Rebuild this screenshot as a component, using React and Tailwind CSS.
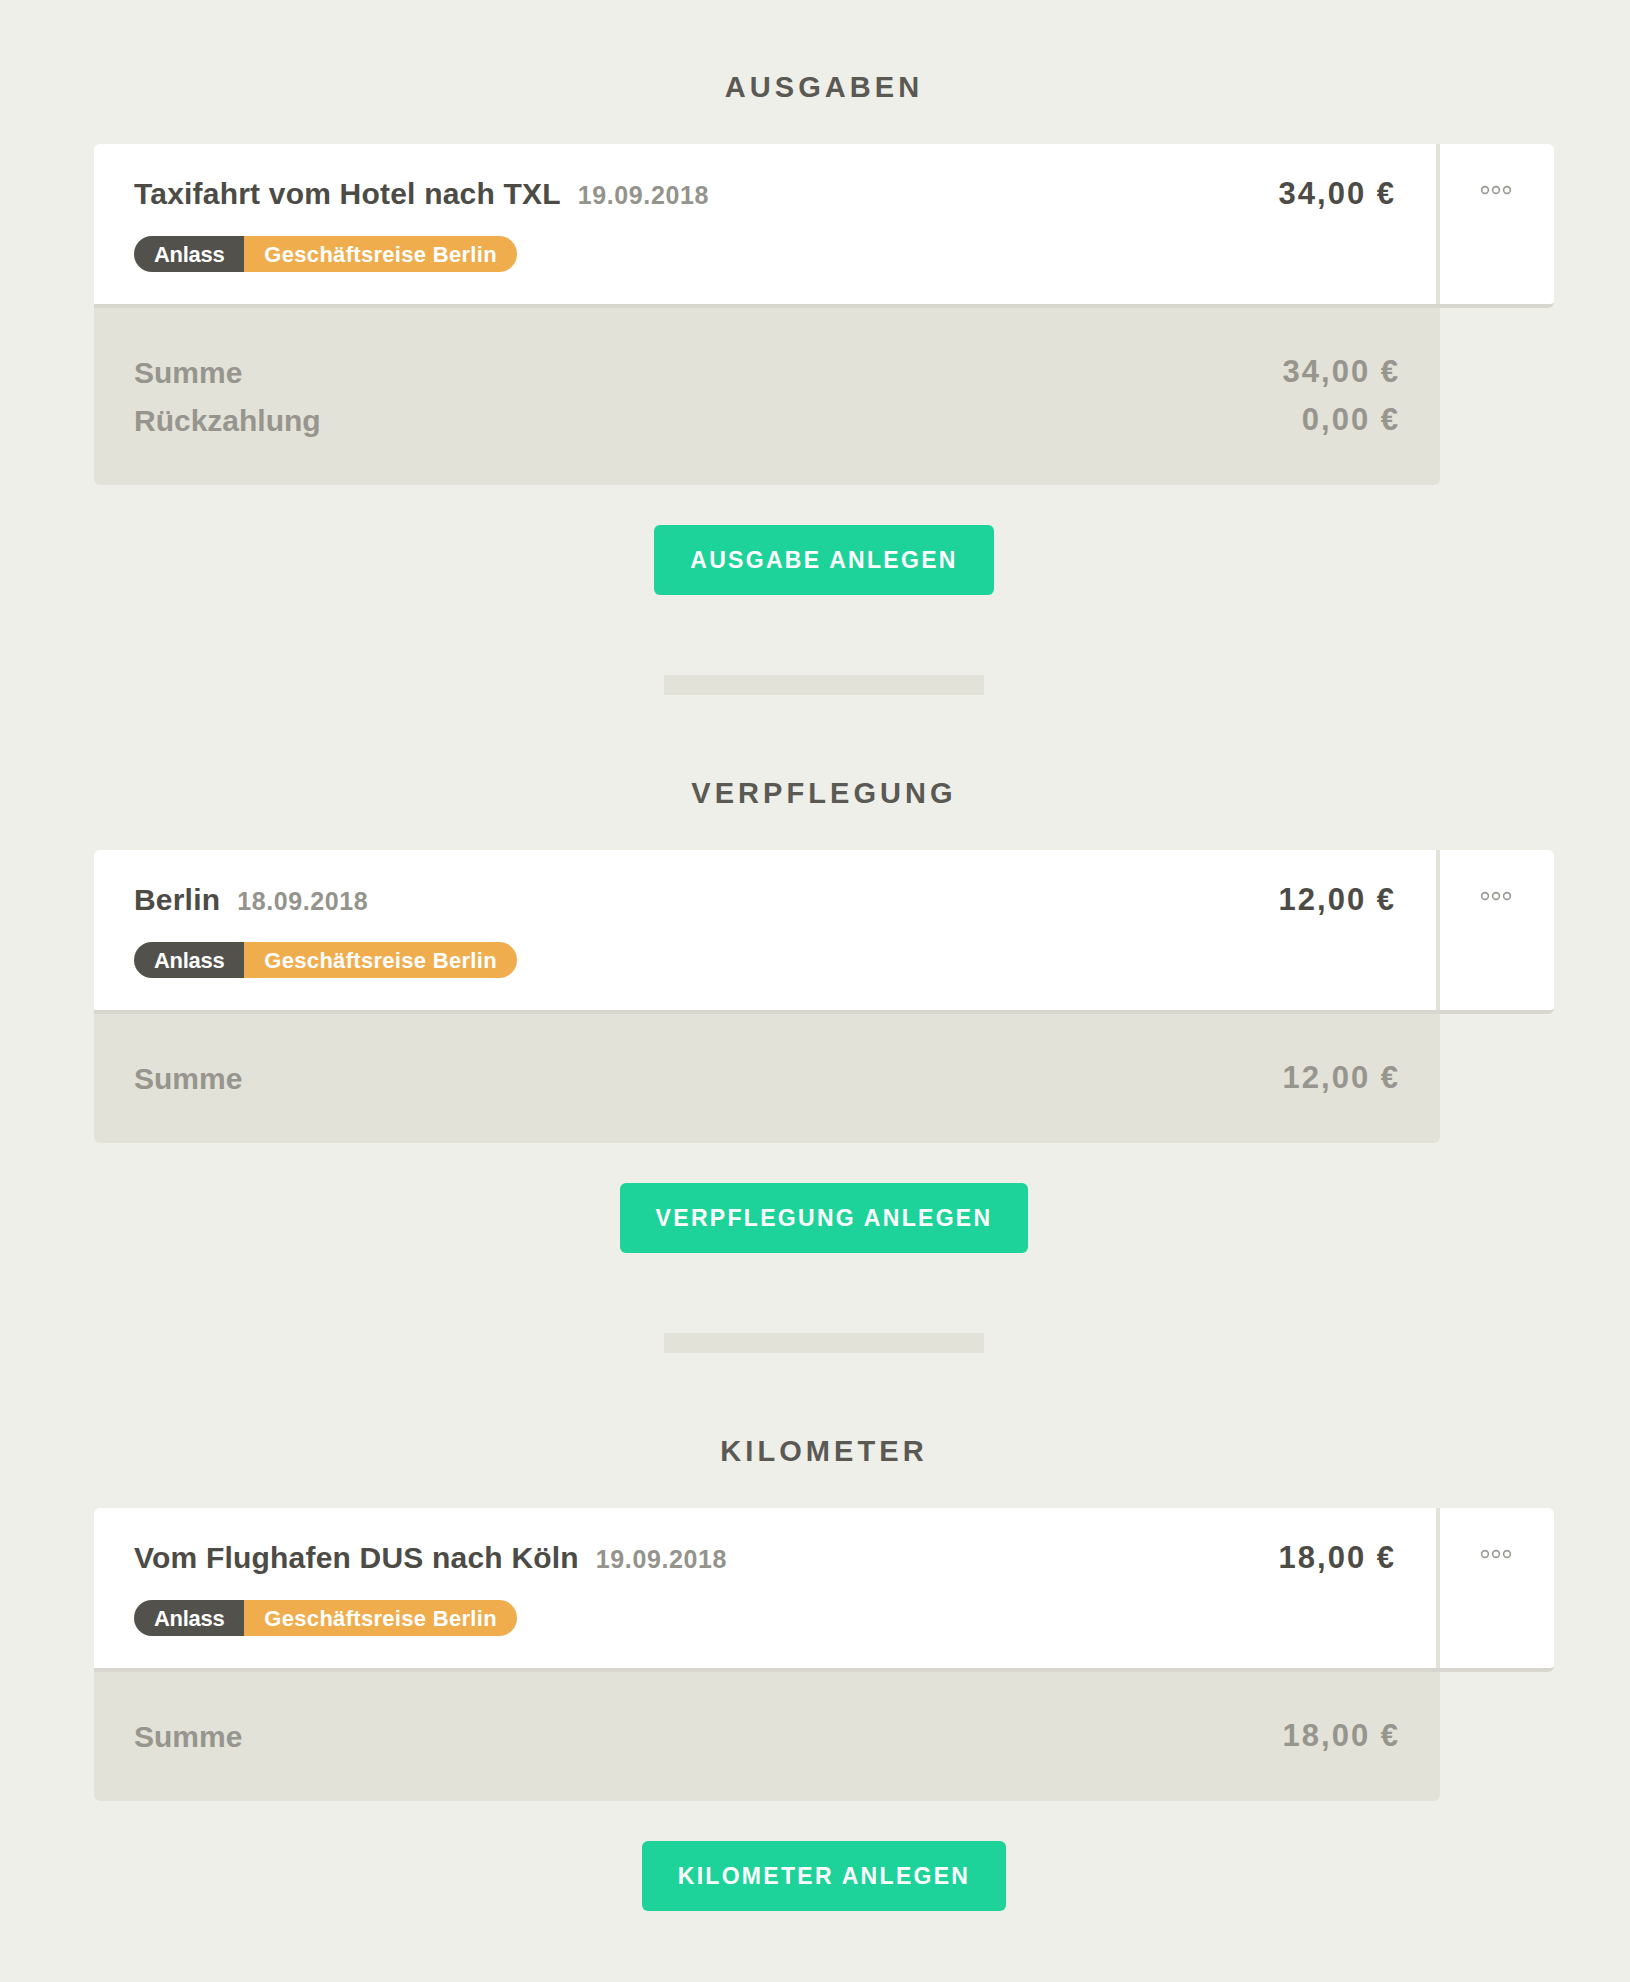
import React from 'react';

const sections = [
  {
    title: 'AUSGABEN',
    button: 'AUSGABE ANLEGEN',
    items: [{ name: 'Taxifahrt vom Hotel nach TXL', date: '19.09.2018', amount: '34,00 €' }],
    totals: [
      ['Summe', '34,00 €'],
      ['Rückzahlung', '0,00 €'],
    ],
  },
  {
    title: 'VERPFLEGUNG',
    button: 'VERPFLEGUNG ANLEGEN',
    items: [{ name: 'Berlin', date: '18.09.2018', amount: '12,00 €' }],
    totals: [['Summe', '12,00 €']],
  },
  {
    title: 'KILOMETER',
    button: 'KILOMETER ANLEGEN',
    items: [{ name: 'Vom Flughafen DUS nach Köln', date: '19.09.2018', amount: '18,00 €' }],
    totals: [['Summe', '18,00 €']],
  },
];

const Dots = () => (
  <svg width="34" height="10" viewBox="0 0 34 10" className="text-[#9a9993]">
    <circle cx="5" cy="5" r="3.4" fill="none" stroke="currentColor" strokeWidth="1.6" />
    <circle cx="16" cy="5" r="3.4" fill="none" stroke="currentColor" strokeWidth="1.6" />
    <circle cx="27" cy="5" r="3.4" fill="none" stroke="currentColor" strokeWidth="1.6" />
  </svg>
);

const EntryCard = ({ item }) => (
  <div className="flex rounded-t-md rounded-br-md border-b-4 border-[#d8d7cf] bg-white">
    <div className="flex-1 px-[40px] pt-[27px] pb-[32px]">
      <div className="flex h-[40px] items-baseline justify-between">
        <div className="flex items-baseline">
          <span className="text-[30px] font-bold tracking-[0.2px] text-[#4c4b46]">{item.name}</span>
          <span className="ml-[17px] text-[25px] font-bold tracking-[0.6px] text-[#94938c]">{item.date}</span>
        </div>
        <span className="text-[31px] font-bold tracking-[2px] text-[#4c4b46]">{item.amount}</span>
      </div>
      <div className="mt-[25px] inline-flex h-[36px] overflow-hidden rounded-full text-[22px] font-bold text-white">
        <span className="flex items-center bg-[#52514c] px-[20px] tracking-[-0.3px]">Anlass</span>
        <span className="flex items-center bg-[#f0ad4e] px-[20px] tracking-[0.3px]">Geschäftsreise Berlin</span>
      </div>
    </div>
    <div className="w-[4px] bg-[#e3e2d8]" />
    <div className="flex w-[114px] justify-center pt-[41px]">
      <div className="h-[10px]">
        <Dots />
      </div>
    </div>
  </div>
);

const Section = ({ section, last }) => (
  <section className="flex flex-col">
    <h2 className="text-center text-[29px] leading-[36px] font-bold tracking-[0.14em] text-[#5a5954]">
      {section.title}
    </h2>
    <div className="mt-[39px]">
      {section.items.map((item) => (
        <EntryCard key={item.name} item={item} />
      ))}
      <div className="w-[1346px] rounded-b-md bg-[#e3e2d8] px-[40px] pt-[40px] pb-[41px]">
        {section.totals.map(([label, value]) => (
          <div key={label} className="flex h-[48px] items-center justify-between text-[30px] font-bold text-[#96958e]">
            <span>{label}</span>
            <span className="text-[31px] tracking-[2px]">{value}</span>
          </div>
        ))}
      </div>
    </div>
    <div className="mt-[40px] flex justify-center">
      <button className="flex h-[70px] items-center rounded-md bg-[#1dd399] px-[36px] text-[23px] font-bold tracking-[0.1em] text-white">
        {section.button}
      </button>
    </div>
    {!last && <div className="mx-auto my-[80px] h-[20px] w-[320px] bg-[#e3e2d8]" />}
  </section>
);

export default function App() {
  return (
    <div className="min-h-[1982px] bg-[#efefe9] pt-[69px] pb-[73px] font-['Liberation_Sans',Arial,sans-serif]">
      <div className="ml-[94px] w-[1460px]">
        {sections.map((s, i) => (
          <Section key={s.title} section={s} last={i === sections.length - 1} />
        ))}
      </div>
    </div>
  );
}
